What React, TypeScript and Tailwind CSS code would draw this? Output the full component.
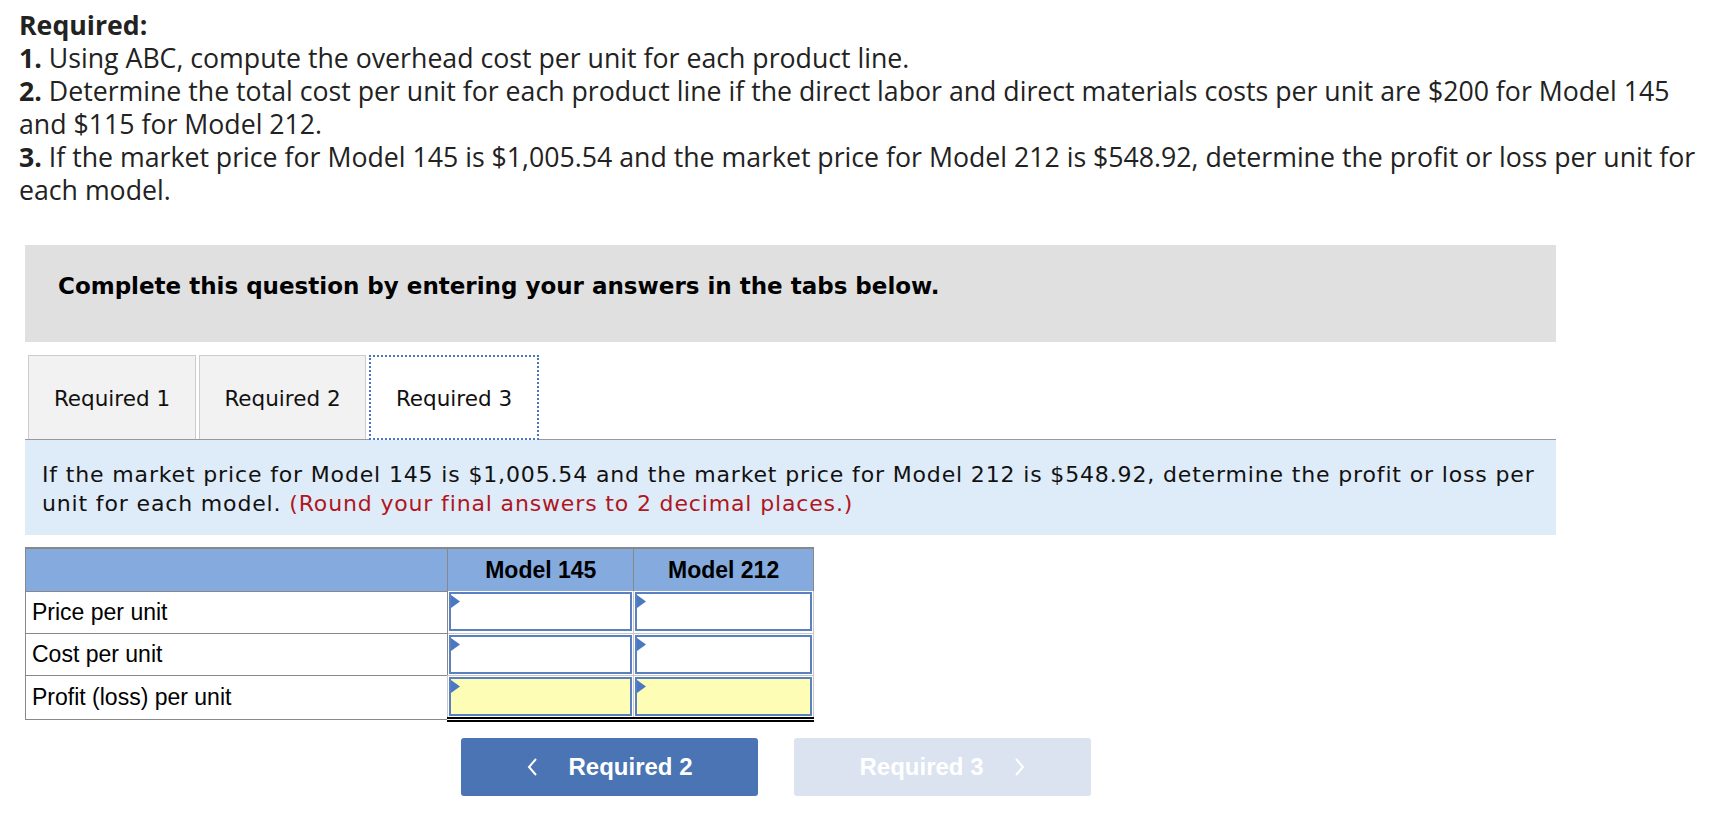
const rows = [
  { label: 'Price per unit', total: false },
  { label: 'Cost per unit', total: false },
  { label: 'Profit (loss) per unit', total: true },
];

function Marker() {
  return (
    <svg className="absolute left-0 top-[1px]" width="9" height="13" viewBox="0 0 9 13">
      <path d="M0 0 L9 6.5 L0 13 Z" fill="#4a78c2" />
    </svg>
  );
}

export default function App() {
  return (
    <div className="w-[1722px] h-[813px] bg-white overflow-hidden">
      <div className="pl-[19px] pr-[10px] pt-[8px] font-['Open_Sans',sans-serif] text-[26.7px] leading-[33px] text-[#222]">
        <p className="font-bold">Required:</p>
        <p>
          <b>1.</b> Using ABC, compute the overhead cost per unit for each product line.
        </p>
        <p>
          <b>2.</b> Determine the total cost per unit for each product line if the direct labor and direct materials costs per unit are $200 for Model 145 and $115 for Model 212.
        </p>
        <p>
          <b>3.</b> If the market price for Model 145 is $1,005.54 and the market price for Model 212 is $548.92, determine the profit or loss per unit for each model.
        </p>
      </div>

      <div className="ml-[25px] mt-[39px] w-[1531px]">
        <div className="h-[97px] bg-[#e0e0e0] pl-[33px] pt-[24px] font-['DejaVu_Sans',sans-serif] text-[23px] font-bold text-black">
          Complete this question by entering your answers in the tabs below.
        </div>

        <div className="mt-[13px] flex items-end gap-[3px] border-b border-[#9a9a9a] pl-[3px] font-['DejaVu_Sans',sans-serif] text-[21.5px] text-[#111]">
          <div className="flex h-[84px] w-[168px] items-center justify-center border border-b-0 border-[#cccccc] bg-[#f2f2f2] pt-[3px]">Required 1</div>
          <div className="flex h-[84px] w-[167px] items-center justify-center border border-b-0 border-[#cccccc] bg-[#f2f2f2] pt-[3px]">Required 2</div>
          <div className="-mb-px flex h-[85px] w-[170px] items-center justify-center border-2 border-dotted border-[#4a76c0] bg-white pt-[3px]">Required 3</div>
        </div>

        <div className="h-[95px] bg-[#deebf8] pl-[17px] pr-[18px] pt-[20px] font-['DejaVu_Sans',sans-serif] text-[22px] leading-[29px] tracking-[0.85px] text-[#111]">
          If the market price for Model 145 is $1,005.54 and the market price for Model 212 is $548.92, determine the profit or loss per unit for each model.{' '}
          <span className="text-[#b0161e]">(Round your final answers to 2 decimal places.)</span>
        </div>

        <table className="mt-[12px] w-[789px] border-collapse font-['Liberation_Sans',sans-serif] text-[23px] text-black">
          <thead>
            <tr className="h-[43px] bg-[#84aade]">
              <th className="w-[423px] border-t-2 border-l border-[#888]"></th>
              <th className="w-[186px] border-t-2 border-l border-[#888] font-bold">Model 145</th>
              <th className="w-[180px] border-t-2 border-x border-[#888] font-bold">Model 212</th>
            </tr>
          </thead>
          <tbody>
            {rows.map((r) => (
              <tr key={r.label} className="h-[42px]">
                <td className="border border-[#888] pl-[6px]">{r.label}</td>
                {[0, 1].map((i) => (
                  <td
                    key={i}
                    className={
                      'border-x border-[#c8c8c8] p-[1px] ' +
                      (r.total ? 'border-b-[5px] border-b-black border-double' : 'border-b')
                    }
                  >
                    <div
                      className={
                        'relative h-[39px] border-2 border-[#5a80c0] ' +
                        (r.total ? 'bg-[#fefdb6]' : 'bg-white')
                      }
                    >
                      <Marker />
                    </div>
                  </td>
                ))}
              </tr>
            ))}
          </tbody>
        </table>

        <div className="mt-[16px] flex gap-[36px] pl-[436px] font-['Liberation_Sans',sans-serif] text-[24px] font-bold">
          <button className="flex h-[58px] w-[297px] items-center justify-center gap-[30px] rounded-[3px] bg-[#4a74b3] text-white">
            <svg width="12" height="20" viewBox="0 0 12 20">
              <path d="M10 2 L3 10 L10 18" fill="none" stroke="white" strokeWidth="2" />
            </svg>
            Required 2
          </button>
          <button className="flex h-[58px] w-[297px] items-center justify-center gap-[30px] rounded-[3px] bg-[#dae3ef] text-white">
            Required 3
            <svg width="12" height="20" viewBox="0 0 12 20">
              <path d="M2 2 L9 10 L2 18" fill="none" stroke="white" strokeWidth="2" />
            </svg>
          </button>
        </div>
      </div>
    </div>
  );
}
